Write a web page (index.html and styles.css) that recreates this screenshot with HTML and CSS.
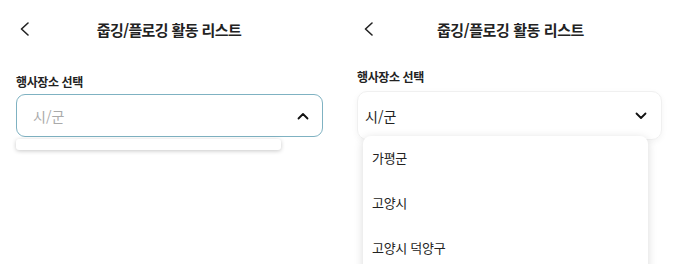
FILE: index.html
```html
<!DOCTYPE html>
<html lang="ko">
<head>
<meta charset="UTF-8">
<title>줍깅/플로깅 활동 리스트</title>
<link rel="stylesheet" href="styles.css">
</head>
<body>
<div class="screens">
  <div class="screen screen-open">
    <div class="header">
      <svg class="back" width="12" height="14" viewBox="0 0 12 14"><path d="M9 1 L2.5 7 L9 13" fill="none" stroke="#222" stroke-width="1.6" stroke-linecap="round" stroke-linejoin="round"/></svg>
      <div class="title">줍깅/플로깅 활동 리스트</div>
    </div>
    <div class="label">행사장소 선택</div>
    <div class="select select-focus">
      <span class="placeholder">시/군</span>
      <svg class="chevron" width="12" height="8" viewBox="0 0 12 8"><path d="M1.5 6.5 L6 2 L10.5 6.5" fill="none" stroke="#111" stroke-width="1.8" stroke-linecap="round" stroke-linejoin="round"/></svg>
    </div>
    <div class="empty-list"></div>
  </div>

  <div class="screen screen-list">
    <div class="header">
      <svg class="back" width="12" height="14" viewBox="0 0 12 14"><path d="M9 1 L2.5 7 L9 13" fill="none" stroke="#222" stroke-width="1.6" stroke-linecap="round" stroke-linejoin="round"/></svg>
      <div class="title">줍깅/플로깅 활동 리스트</div>
    </div>
    <div class="label">행사장소 선택</div>
    <div class="select select-plain">
      <span class="value">시/군</span>
      <svg class="chevron" width="12" height="8" viewBox="0 0 12 8"><path d="M1.5 1.5 L6 6 L10.5 1.5" fill="none" stroke="#111" stroke-width="1.8" stroke-linecap="round" stroke-linejoin="round"/></svg>
    </div>
    <div class="options">
      <div class="option">가평군</div>
      <div class="option">고양시</div>
      <div class="option">고양시 덕양구</div>
    </div>
  </div>
</div>
</body>
</html>
```

FILE: styles.css
```css
body {
  margin: 0;
  background: #fff;
  font-family: "Noto Sans CJK KR", "Noto Sans", sans-serif;
  color: #222;
  overflow: hidden;
}
.screens {
  display: flex;
  width: 680px;
  height: 264px;
}
.screen {
  width: 340px;
  box-sizing: border-box;
  padding: 0 16px;
}
.screen-list {
  padding: 0 18px 0 17px;
}
.header {
  position: relative;
  height: 58px;
  display: flex;
  align-items: center;
  justify-content: center;
}
.back {
  position: absolute;
  left: 3px;
  top: 22px;
}
.screen-list .back {
  left: 6px;
}
.title {
  font-size: 15px;
  font-weight: 700;
  letter-spacing: -0.6px;
  color: #222;
}
.screen-open .title {
  margin-left: -2px;
}
.screen-list .title {
  margin-left: 2px;
  letter-spacing: -0.4px;
}
.label {
  margin-top: 17px;
  font-size: 12px;
  font-weight: 700;
  letter-spacing: -0.4px;
  line-height: 14px;
}
.screen-list .label {
  margin-top: 12px;
}
.select {
  display: flex;
  align-items: center;
  justify-content: space-between;
  box-sizing: border-box;
  font-size: 14px;
}
.select-focus {
  margin-top: 5px;
  width: 307px;
  height: 43px;
  border: 1px solid #7fb2c2;
  border-radius: 9px;
  padding: 0 13px 0 16px;
}
.placeholder {
  color: #aaa;
}
.select-plain {
  margin-top: 7px;
  width: 305px;
  height: 49px;
  border: 1px solid #f0f0f0;
  border-radius: 10px;
  padding: 0 14px 0 7px;
  box-shadow: 0 2px 6px rgba(0, 0, 0, 0.05);
}
.value {
  color: #222;
}
.empty-list {
  margin-top: 2px;
  width: 265px;
  height: 11px;
  border-radius: 3px;
  background: #fff;
  box-shadow: 0 1px 4px rgba(0, 0, 0, 0.22);
}
.options {
  margin: -4px 0 0 6px;
  width: 285px;
  height: 140px;
  background: #fff;
  border-radius: 8px;
  box-shadow: 0 2px 10px rgba(0, 0, 0, 0.15);
}
.option {
  height: 45px;
  line-height: 44px;
  padding-left: 9px;
  font-size: 13px;
  letter-spacing: -0.3px;
  color: #222;
}
```
